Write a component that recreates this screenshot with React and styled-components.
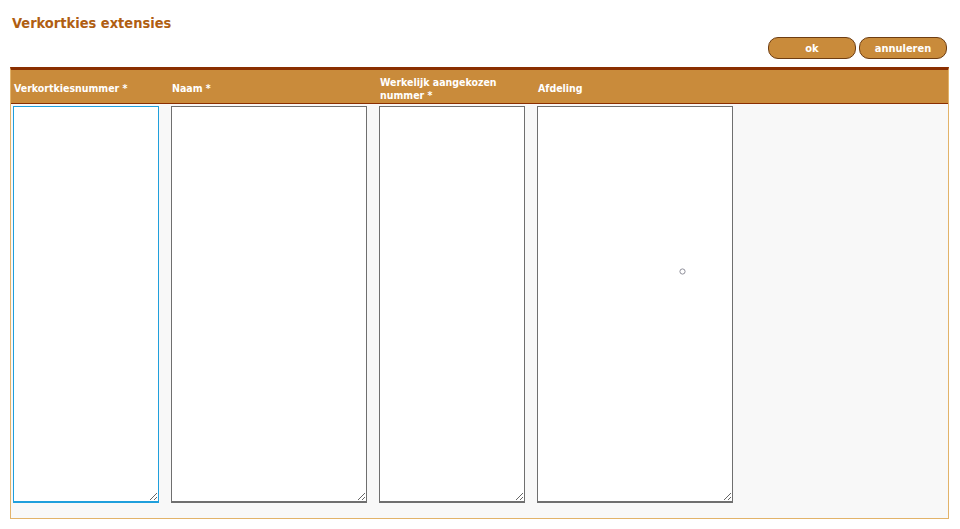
import React from 'react';
import styled, { createGlobalStyle } from 'styled-components';

const GlobalStyle = createGlobalStyle`
  html, body {
    margin: 0;
    padding: 0;
    background: #ffffff;
  }
  body {
    font-family: Tahoma, "DejaVu Sans Condensed", "DejaVu Sans", sans-serif;
  }
`;

const Page = styled.div`
  position: relative;
  width: 960px;
  height: 529px;
  box-sizing: border-box;
  padding: 13px 11px 0 10px;
`;

const Title = styled.h1`
  margin: 0 0 0 2px;
  font-size: 14.5px;
  font-weight: bold;
  color: #b05e12;
  line-height: 20px;
`;

const Toolbar = styled.div`
  display: flex;
  justify-content: flex-end;
  gap: 3px;
  margin-top: 4px;
  padding-right: 2px;
`;

const Button = styled.button`
  width: 88px;
  height: 22px;
  padding: 0;
  border: 1px solid #6e3d12;
  border-radius: 10px;
  background: #c98b3b;
  color: #ffffff;
  font-family: Tahoma, "DejaVu Sans Condensed", "DejaVu Sans", sans-serif;
  font-size: 11px;
  font-weight: bold;
  cursor: pointer;
`;

const Table = styled.div`
  margin-top: 8px;
  border-top: 3px solid #8a2e00;
  border-left: 1px solid #e2b36a;
  border-right: 1px solid #e2b36a;
  border-bottom: 1px solid #e2b36a;
`;

const Cols = `158px 208px 158px 208px 1fr`;

const HeaderRow = styled.div`
  display: grid;
  grid-template-columns: ${Cols};
  align-items: center;
  height: 33px;
  background: #c98b3b;
  border-bottom: 1px solid #8a2e00;
`;

const HeaderCell = styled.div`
  padding: 4px 10px 0 3px;
  color: #ffffff;
  font-size: 10.5px;
  font-weight: bold;
  line-height: 13px;
`;

const BodyRow = styled.div`
  display: grid;
  grid-template-columns: ${Cols};
  background: #f8f8f8;
  padding: 2px 0 15px;
`;

const Cell = styled.div`
  padding-left: 2px;
`;

const Field = styled.textarea`
  display: block;
  box-sizing: border-box;
  width: ${p => p.$w}px;
  height: 397px;
  margin: 0;
  padding: 2px;
  background: #ffffff;
  border: 1px solid ${p => (p.$focused ? '#1f9fdc' : '#6f6f6f')};
  border-bottom-width: 2px;
  outline: none;
  resize: vertical;
  font-family: "DejaVu Sans", sans-serif;
  font-size: 12px;
`;

const Cursor = styled.svg`
  position: absolute;
  left: 679px;
  top: 268px;
  pointer-events: none;
`;

const columns = [
  { label: 'Verkortkiesnummer *', width: 146, focused: true },
  { label: 'Naam *', width: 196 },
  { label: 'Werkelijk aangekozen nummer *', width: 146 },
  { label: 'Afdeling', width: 196 },
];

export default function App() {
  return (
    <>
      <GlobalStyle />
      <Page>
        <Title>Verkortkies extensies</Title>
        <Toolbar>
          <Button>ok</Button>
          <Button>annuleren</Button>
        </Toolbar>
        <Table>
          <HeaderRow>
            {columns.map(c => (
              <HeaderCell key={c.label}>{c.label}</HeaderCell>
            ))}
            <HeaderCell />
          </HeaderRow>
          <BodyRow>
            {columns.map(c => (
              <Cell key={c.label}>
                <Field $w={c.width} $focused={c.focused} />
              </Cell>
            ))}
            <Cell />
          </BodyRow>
        </Table>
        <Cursor width="7" height="7" viewBox="0 0 7 7">
          <circle cx="3.5" cy="3.5" r="2.6" fill="none" stroke="#8f8f9a" strokeWidth="1" />
        </Cursor>
      </Page>
    </>
  );
}
